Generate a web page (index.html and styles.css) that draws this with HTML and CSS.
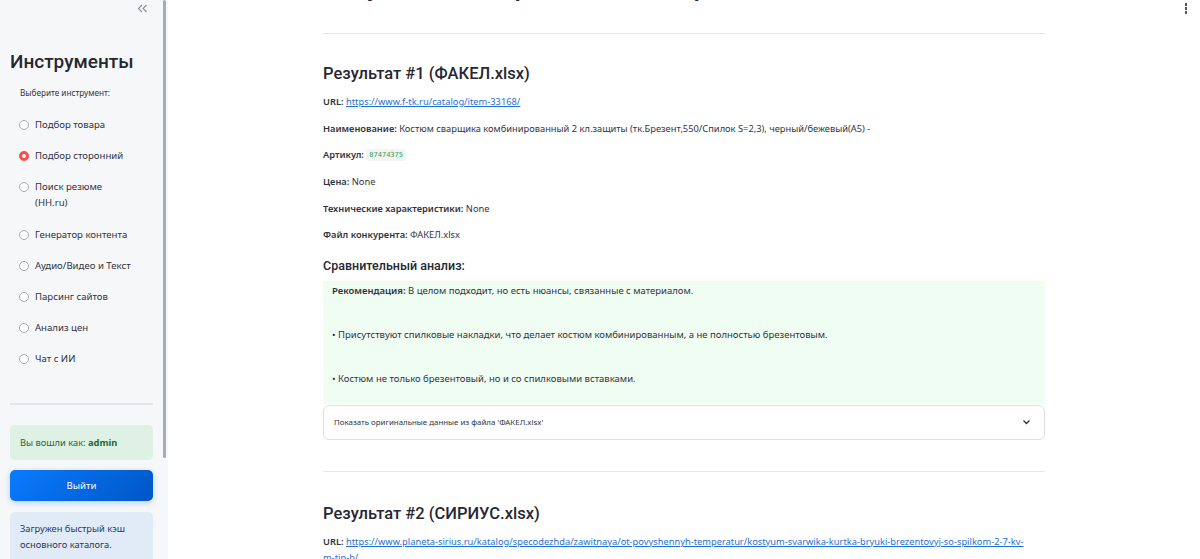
FILE: index.html
```html
<!DOCTYPE html>
<html lang="ru">
<head>
<meta charset="utf-8">
<link rel="stylesheet" href="styles.css">
</head>
<body>
<div class="app">
  <aside class="sidebar">
    <div class="collapse">
      <svg width="11" height="9" viewBox="0 0 11 9"><path d="M5 1 L1.5 4.5 L5 8 M9.5 1 L6 4.5 L9.5 8" fill="none" stroke="#8a8d96" stroke-width="1.1"/></svg>
    </div>
    <h1 class="side-title">Инструменты</h1>
    <div class="side-label">Выберите инструмент:</div>
    <ul class="radios">
      <li><span class="radio"></span><span>Подбор товара</span></li>
      <li><span class="radio on"></span><span>Подбор сторонний</span></li>
      <li><span class="radio"></span><span>Поиск резюме<br>(HH.ru)</span></li>
      <li><span class="radio"></span><span>Генератор контента</span></li>
      <li><span class="radio"></span><span>Аудио/Видео и Текст</span></li>
      <li><span class="radio"></span><span>Парсинг сайтов</span></li>
      <li><span class="radio"></span><span>Анализ цен</span></li>
      <li><span class="radio"></span><span>Чат с ИИ</span></li>
    </ul>
    <div class="side-divider"></div>
    <div class="success">Вы вошли как: <b>admin</b></div>
    <button class="logout">Выйти</button>
    <div class="info">Загружен быстрый кэш основного каталога.</div>
    <div class="scroll-thumb"></div>
  </aside>
  <main class="main">
    <div class="menu-dots"><i></i><i></i><i></i></div>
    <div class="content">
      <h1 class="page-title">Результаты стороннего подбора</h1>
      <hr class="sep first">
      <h2 class="res-title">Результат #1 (ФАКЕЛ.xlsx)</h2>
      <p class="row"><b>URL:</b> <a href="#">https://www.f-tk.ru/catalog/item-33168/</a></p>
      <p class="row"><b>Наименование:</b> Костюм сварщика комбинированный 2 кл.защиты (тк.Брезент,550/Спилок S=2,3), черный/бежевый(А5) -</p>
      <p class="row"><b>Артикул:</b> <code>87474375</code></p>
      <p class="row"><b>Цена:</b> None</p>
      <p class="row"><b>Технические характеристики:</b> None</p>
      <p class="row"><b>Файл конкурента:</b> ФАКЕЛ.xlsx</p>
      <h3 class="sub-title">Сравнительный анализ:</h3>
      <div class="analysis">
        <p><b>Рекомендация:</b> В целом подходит, но есть нюансы, связанные с материалом.</p>
        <p>• Присутствуют спилковые накладки, что делает костюм комбинированным, а не полностью брезентовым.</p>
        <p>• Костюм не только брезентовый, но и со спилковыми вставками.</p>
      </div>
      <div class="expander">
        <span>Показать оригинальные данные из файла 'ФАКЕЛ.xlsx'</span>
        <svg width="9" height="6" viewBox="0 0 9 6"><path d="M1.5 1.5 L4.5 4.5 L7.5 1.5" fill="none" stroke="#31333f" stroke-width="1.3"/></svg>
      </div>
      <hr class="sep second">
      <h2 class="res-title second">Результат #2 (СИРИУС.xlsx)</h2>
      <p class="row url2"><b>URL:</b> <a href="#">https://www.planeta-sirius.ru/katalog/specodezhda/zawitnaya/ot-povyshennyh-temperatur/kostyum-svarwika-kurtka-bryuki-brezentovyj-so-spilkom-2-7-kv-m-tip-b/</a></p>
    </div>
  </main>
</div>
</body>
</html>
```

FILE: styles.css
```css
* { box-sizing: border-box; }
html, body { margin: 0; padding: 0; }
body {
  width: 1200px;
  height: 559px;
  overflow: hidden;
  font-family: "Noto Sans", "Open Sans", sans-serif;
  color: #31333f;
  background: #ffffff;
}
.app { display: flex; height: 559px; }

.sidebar {
  position: relative;
  width: 168px;
  flex: 0 0 168px;
  background: #f6f7f9;
  padding: 0 15px 0 10px;
  display: flex;
  flex-direction: column;
  overflow: hidden;
}
.sidebar > * { flex-shrink: 0; }
.collapse { display: flex; justify-content: flex-end; padding: 4px 5px 0 0; height: 14px; }
.side-title {
  margin: 37px 0 0;
  font-family: Roboto, sans-serif;
  font-size: 19px;
  font-weight: 500;
  line-height: 22px;
  color: #262730;
}
.side-label {
  margin: 14px 0 0 10px;
  font-size: 8.2px;
  line-height: 12px;
}
.radios { list-style: none; margin: 18px 0 0 9px; padding: 0; }
.radios li {
  display: flex;
  align-items: flex-start;
  gap: 6px;
  font-size: 9.6px;
  line-height: 16px;
  margin-bottom: 15.2px;
}
.radio {
  flex: 0 0 10px;
  width: 10px;
  height: 10px;
  margin-top: 3px;
  border: 1px solid #a9abb2;
  border-radius: 50%;
  background: #fff;
}
.radio.on { border: 3px solid #ff4b4b; background: #fff; }
.side-divider { height: 2px; background: #e4e6ea; margin: 20px 0 0; }
.success {
  margin-top: 20px;
  height: 35px;
  border-radius: 5px;
  background: #dff0e4;
  color: #1d6b35;
  font-size: 9.3px;
  line-height: 35px;
  padding-left: 10px;
}
.success b { font-weight: 700; }
.logout {
  margin-top: 10px;
  height: 31px;
  border: 0;
  border-radius: 5px;
  background: linear-gradient(135deg, #0a7bff 0%, #0056c6 100%);
  color: #fff;
  font-family: inherit;
  font-size: 9.6px;
  box-shadow: 0 2px 6px rgba(0, 110, 255, 0.25);
}
.info {
  margin-top: 11px;
  border-radius: 5px;
  background: #e1ebf7;
  color: #1e3a5f;
  font-size: 9.3px;
  line-height: 16px;
  padding: 9px 10px 12px;
}
.scroll-thumb {
  position: absolute;
  top: 0;
  right: 2px;
  width: 3px;
  height: 458px;
  border-radius: 2px;
  background: #a9abb0;
}

.main { position: relative; flex: 1; }
.menu-dots {
  position: absolute;
  top: 3px;
  right: 13px;
  display: flex;
  flex-direction: column;
  gap: 1.5px;
}
.menu-dots i { display: block; width: 2.5px; height: 2.5px; background: #555; }
.content { width: 722px; margin: 0 auto; }
.page-title {
  margin: -27px 0 0;
  font-family: Roboto, sans-serif;
  font-size: 26px;
  font-weight: 500;
  line-height: 28px;
  white-space: nowrap;
  color: #262730;
}
.sep { border: 0; height: 1px; background: #e6e7ea; margin: 0; }
.sep.first { margin-top: 32px; }
.res-title {
  margin: 30px 0 0;
  font-family: Roboto, sans-serif;
  font-size: 16.5px;
  font-weight: 500;
  line-height: 20px;
  color: #262730;
}
.res-title.second { margin-top: 32px; }
.row {
  margin: 0;
  font-size: 9.3px;
  line-height: 16px;
  padding: 5.3px 0;
}
.row.url2 { padding-right: 16px; }
.res-title + .row { margin-top: 5px; }
.row b { font-weight: 600; }
.row a { color: #1f6fd6; }
.row code {
  font-family: "DejaVu Sans Mono", monospace;
  font-size: 7px;
  color: #2a9d57;
  background: #f2f5f3;
  padding: 2px 3px;
  border-radius: 3px;
  vertical-align: 1px;
}
.sub-title {
  margin: 8px 0 0;
  font-family: Roboto, sans-serif;
  font-size: 12.5px;
  font-weight: 500;
  line-height: 18px;
  color: #262730;
}
.analysis {
  margin-top: 6px;
  background: #effdf3;
  padding: 2px 9px 17px;
}
.analysis p { margin: 0 0 28px; font-size: 9.5px; line-height: 16px; }
.analysis p:last-child { margin-bottom: 0; }
.analysis b { font-weight: 600; }
.expander {
  margin-top: 1px;
  height: 35px;
  border: 1px solid #dfe0e4;
  border-radius: 6px;
  display: flex;
  align-items: center;
  justify-content: space-between;
  padding: 0 13px 0 10px;
  font-size: 7.9px;
  background: #fff;
}
.sep.second { margin-top: 31px; }
```
